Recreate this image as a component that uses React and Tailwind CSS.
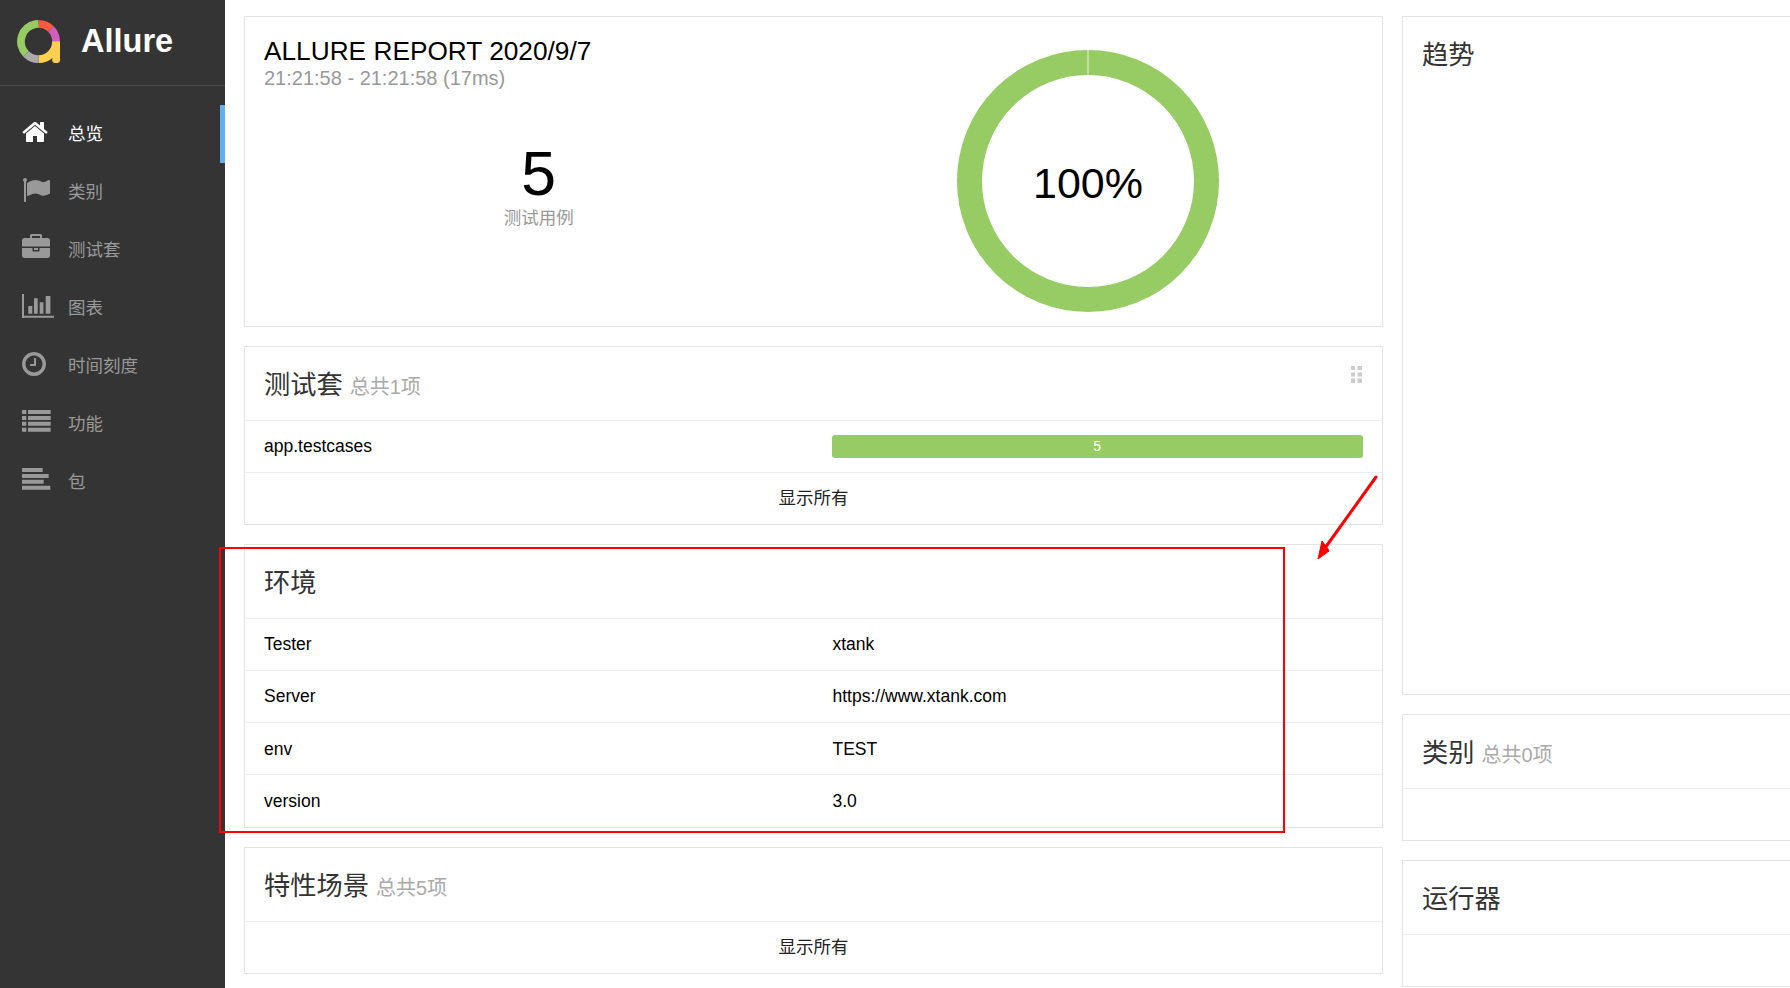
const paths = {
  home: 'M1408 992v480q0 26-19 45t-45 19h-384v-384h-256v384h-384q-26 0-45-19t-19-45v-480q0-1 .5-3t.5-3l575-474 575 474q1 2 1 6zm223-69l-62 74q-8 9-21 11h-3q-13 0-21-7l-692-577-692 577q-12 8-24 7-13-2-21-11l-62-74q-8-10-7-23.500t11-21.500l719-599q32-26 76-26t76 26l244 204v-195q0-14 9-23t23-9h192q14 0 23 9t9 23v408l219 182q10 8 11 21.500t-7 23.500z',
  flag: 'M320 256q0 72-64 110v1266q0 13-9.500 22.500t-22.500 9.500h-64q-13 0-22.500-9.500t-9.500-22.500v-1266q-64-38-64-110 0-53 37.500-90.500t90.500-37.500 90.500 37.500 37.500 90.500zm1472 64v763q0 25-12.500 38.500t-39.500 27.500q-215 116-369 116-61 0-123.500-22t-108.500-48-115.500-48-142.500-22q-192 0-464 146-17 9-33 9-26 0-45-19t-19-45v-742q0-32 31-55 21-14 79-43 236-120 421-120 107 0 200 29t219 88q38 19 88 19 54 0 117.500-21t110-47 88-47 54.500-21q26 0 45 19t19 45z',
  briefcase: 'M640 256h512v-128h-512v128zm1152 640v480q0 66-47 113t-113 47h-1472q-66 0-113-47t-47-113v-480h672v160q0 26 19 45t45 19h320q26 0 45-19t19-45v-160h672zm-768 0v128h-256v-128h256zm768-480v384h-1792v-384q0-66 47-113t113-47h352v-160q0-40 28-68t68-28h576q40 0 68 28t28 68v160h352q66 0 113 47t47 113z',
  clock: 'M896 544v448q0 14-9 23t-23 9h-320q-14 0-23-9t-9-23v-64q0-14 9-23t23-9h224v-352q0-14 9-23t23-9h64q14 0 23 9t9 23zm416 352q0-148-73-273t-198-198-273-73-273 73-198 198-73 273 73 273 198 198 273 73 273-73 198-198 73-273zm224 0q0 209-103 385.500t-279.500 279.500-385.500 103-385.500-103-279.500-279.500-103-385.500 103-385.500 279.500-279.500 385.500-103 385.500 103 279.500 279.500 103 385.500z',
  // bars drawn to the sidebar's own proportions, 64 units to a pixel
  chart: 'M0 128h128v1536h-128zM0 1517h2048v128h-2048zM403 896h256v493h-256zM768 403h237v986h-237zM1133 659h237v730h-237zM1517 256h301v1133h-301z',
  list: 'M0 128h275v256h-275zM384 128h1451v256h-1451zM0 506h275v256h-275zM384 506h1451v256h-1451zM0 884h275v256h-275zM384 884h1451v256h-1451zM0 1262h275v256h-275zM384 1262h1451v256h-1451z',
  align: 'M0 128h1323v256h-1323zM0 506h1707v256h-1707zM0 884h1387v256h-1387zM0 1262h1813v256h-1813z',
};

const navItems = [
  { icon: 'home', label: '总览', active: true },
  { icon: 'flag', label: '类别' },
  { icon: 'briefcase', label: '测试套' },
  { icon: 'chart', label: '图表', wide: true },
  { icon: 'clock', label: '时间刻度' },
  { icon: 'list', label: '功能' },
  { icon: 'align', label: '包' },
];

const envRows = [
  ['Tester', 'xtank'],
  ['Server', 'https://www.xtank.com'],
  ['env', 'TEST'],
  ['version', '3.0'],
];

const NavIcon = ({ name, wide }) => (
  <svg viewBox={wide ? '0 0 2048 1792' : '0 0 1792 1792'} className={`overflow-visible ${wide ? 'h-7 w-8' : 'h-7 w-7'}`} fill="currentColor">
    <path d={paths[name]} />
  </svg>
);

const Logo = () => (
  <svg viewBox="0 0 44 44" className="h-[43px] w-[43px]" fill="none" strokeWidth="8">
    <path d="M22 4a18 18 0 0 1 12.700 5.300" stroke="#fd5a3e" />
    <path d="M34.700 9.300a18 18 0 0 1 5.300 12.700" stroke="#d35ebe" />
    <path d="M40 22a18 18 0 0 1-18 18" stroke="#ffd050" />
    <path d="M22 40a18 18 0 0 1-12.700-5.300" stroke="#aaaaaa" />
    <path d="M9.300 34.700a18 18 0 0 1 9.600-30.400l3.100-.3" stroke="#97cc64" />
    <path d="M36 22h8v19.500a2.500 2.500 0 0 1-2.500 2.500h-3a2.500 2.500 0 0 1-2.500-2.500z" fill="#ffd050" />
  </svg>
);

const Sidebar = () => (
  <aside className="h-full w-[225px] shrink-0 bg-[#343434] text-[#999999]">
    <div className="flex h-[86px] items-center border-b border-[#4a4a4a] pb-[2px] pl-[17px]">
      <Logo />
      <span className="ml-[21px] text-[32.500px] font-bold leading-none text-white">Allure</span>
    </div>
    <nav className="mt-[19px]">
      {navItems.map((item) => (
        <div
          key={item.label}
          className={`flex h-[58px] items-center pl-[22px] text-[17.500px] ${item.active ? 'border-r-[5px] border-[#5fb0ee] text-white' : ''}`}
        >
          <span className="mb-1 w-[47px] shrink-0">
            <NavIcon name={item.icon} wide={item.wide} />
          </span>
          <span className="-ml-px">{item.label}</span>
        </div>
      ))}
    </nav>
  </aside>
);

const Card = ({ children, className = '' }) => (
  <section className={`border border-[#e4e4e4] bg-white ${className}`}>{children}</section>
);

const CardHeader = ({ title, count, grip }) => (
  <div className="relative flex h-[72.500px] items-center px-[19px] pt-[3px]">
    <h2 className="text-[26.250px] font-normal leading-none text-[#333333]">{title}</h2>
    {count && <span className="ml-[7px] mt-1 text-[20px] leading-none text-[#aaaaaa]">{count}</span>}
    {grip && (
      <svg viewBox="0 0 11 17" className="absolute right-[20px] top-[19px] h-[17px] w-[11px]" fill="#cccccc">
        <rect width="4" height="4" />
        <rect x="6.500" width="4.500" height="4" />
        <rect y="6.500" width="4" height="4" />
        <rect x="6.500" y="6.500" width="4.500" height="4" />
        <rect y="12.500" width="4" height="4.500" />
        <rect x="6.500" y="12.500" width="4.500" height="4.500" />
      </svg>
    )}
  </div>
);

const ShowAll = () => (
  <div className="flex h-[52px] items-center justify-center border-t border-[#eceef1] text-[17.500px] text-[#222222]">
    显示所有
  </div>
);

const App = () => (
  <div className="relative flex h-screen w-full overflow-hidden bg-white font-['Liberation_Sans','Noto_Sans_CJK_SC',sans-serif] text-[17.500px] text-black">
    <Sidebar />
    <main className="flex min-w-0 flex-1 gap-[19px] pl-[19px] pt-4">
      <div className="flex w-[1139px] shrink-0 flex-col gap-[19px]">
        <Card className="grid h-[311px] grid-cols-2 px-[19px]">
          <div className="pt-[21px]">
            <h1 className="text-[26.250px] font-normal leading-none">ALLURE REPORT 2020/9/7</h1>
            <div className="mt-1 text-[20px] leading-none text-[#999999]">21:21:58 - 21:21:58 (17ms)</div>
            <div className="mt-[54px] text-center">
              <div className="text-[62.500px] leading-none">5</div>
              <div className="mt-[2px] text-[17.500px] leading-[22px] text-[#999999]">测试用例</div>
            </div>
          </div>
          <div className="flex justify-center pt-[32px]">
            <svg viewBox="0 0 264 264" className="h-[264px] w-[264px]">
              <circle cx="132" cy="132" r="118.500" fill="none" stroke="#97cc64" strokeWidth="25" />
              <rect x="131.500" y="1" width="1" height="25" fill="#e8f3dc" />
              <text x="132" y="149" textAnchor="middle" fontSize="43" fill="#000000">100%</text>
            </svg>
          </div>
        </Card>

        <Card className="h-[179px]">
          <CardHeader title="测试套" count="总共1项" grip />
          <div className="grid h-[52.500px] grid-cols-2 items-center border-t border-[#eceef1]">
            <div className="pl-[19px]">app.testcases</div>
            <div className="pl-[18px] pr-[19px]">
              <div className="mt-px flex h-[23px] items-center justify-center rounded-[3px] bg-[#97cc64] text-[14px] text-white">5</div>
            </div>
          </div>
          <ShowAll />
        </Card>

        <Card className="h-[284px]">
          <CardHeader title="环境" />
          {envRows.map(([name, value]) => (
            <div key={name} className="grid h-[52.250px] grid-cols-2 items-center border-t border-[#eceef1]">
              <div className="pl-[19px]">{name}</div>
              <div className="pl-[19px]">{value}</div>
            </div>
          ))}
        </Card>

        <Card className="h-[127px]">
          <CardHeader title="特性场景" count="总共5项" />
          <ShowAll />
        </Card>
      </div>

      <div className="flex w-[1139px] shrink-0 flex-col gap-[19px]">
        <Card className="h-[679px]">
          <CardHeader title="趋势" />
        </Card>
        <Card className="h-[127px]">
          <CardHeader title="类别" count="总共0项" />
          <div className="h-[52px] border-t border-[#eceef1]" />
        </Card>
        <Card className="h-[127px]">
          <CardHeader title="运行器" />
          <div className="h-[52px] border-t border-[#eceef1]" />
        </Card>
      </div>
    </main>

    {/* annotation drawn over the screenshot */}
    <div className="absolute left-[219px] top-[547px] h-[286px] w-[1066px] border-2 border-[#ff0000]" />
    <svg className="absolute left-[1310px] top-[470px] h-[100px] w-[75px]" viewBox="1310 470 75 100" fill="#ff0000">
      <path d="M1376 477L1325 548" stroke="#ff0000" strokeWidth="3" strokeLinecap="round" />
      <path d="M1318 559L1322 541L1328 549L1329 551z" stroke="#ff0000" strokeWidth="1" />
    </svg>
  </div>
);

export default App;
